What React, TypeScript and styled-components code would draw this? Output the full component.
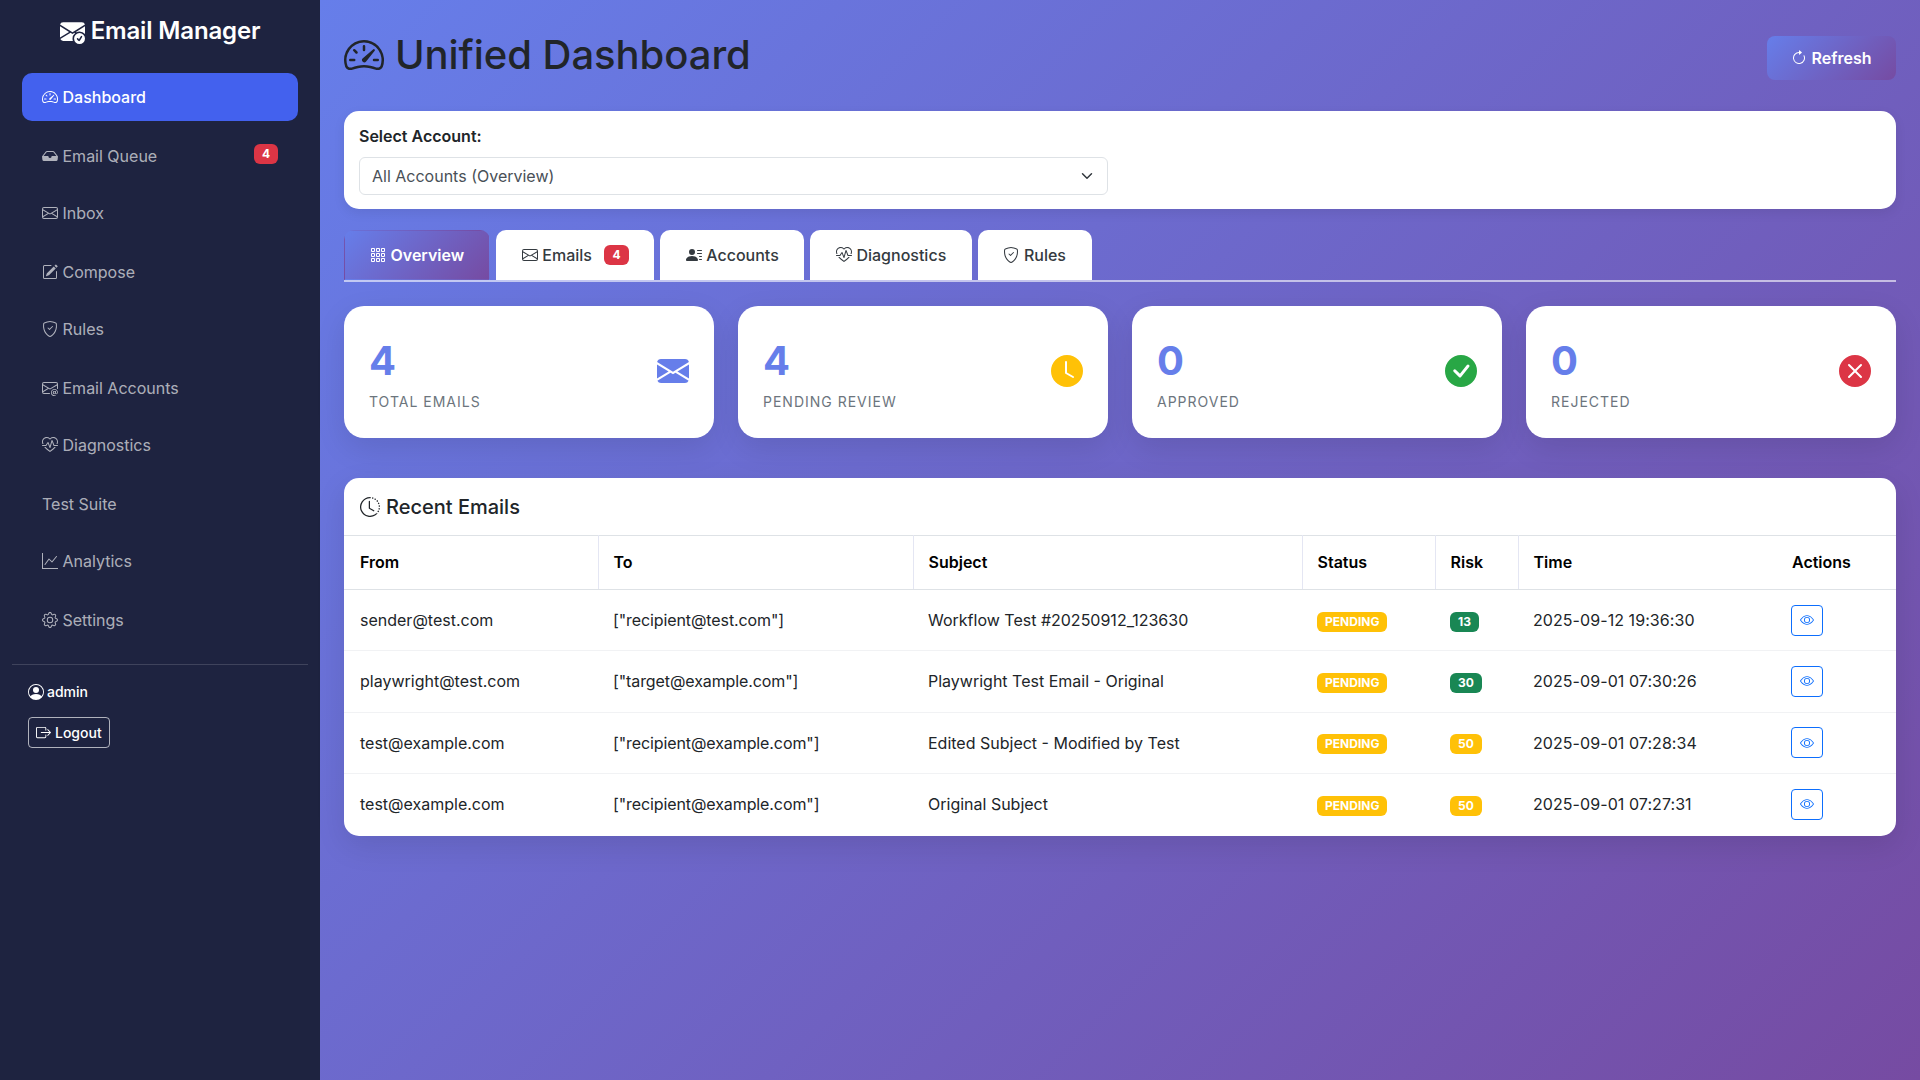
import { FC, ReactNode } from 'react';
import styled, { createGlobalStyle } from 'styled-components';
import {
  BsArrowClockwise,
  BsBoxArrowRight,
  BsCheckCircleFill,
  BsClockFill,
  BsClockHistory,
  BsEnvelope,
  BsEnvelopeAt,
  BsEnvelopeCheckFill,
  BsEnvelopeFill,
  BsEye,
  BsGear,
  BsGraphUp,
  BsGrid3X3Gap,
  BsHeartPulse,
  BsInboxFill,
  BsPencilSquare,
  BsPersonCircle,
  BsPersonLinesFill,
  BsShieldCheck,
  BsSpeedometer2,
  BsXCircleFill,
} from 'react-icons/bs';

const GRADIENT = 'linear-gradient(135deg, #667eea 0%, #764ba2 100%)';

const navItems: { label: string; icon?: ReactNode; badge?: number }[] = [
  { label: 'Dashboard', icon: <BsSpeedometer2 /> },
  { label: 'Email Queue', icon: <BsInboxFill />, badge: 4 },
  { label: 'Inbox', icon: <BsEnvelope /> },
  { label: 'Compose', icon: <BsPencilSquare /> },
  { label: 'Rules', icon: <BsShieldCheck /> },
  { label: 'Email Accounts', icon: <BsEnvelopeAt /> },
  { label: 'Diagnostics', icon: <BsHeartPulse /> },
  { label: 'Test Suite' },
  { label: 'Analytics', icon: <BsGraphUp /> },
  { label: 'Settings', icon: <BsGear /> },
];

const tabs: { label: string; icon: ReactNode; badge?: number }[] = [
  { label: 'Overview', icon: <BsGrid3X3Gap /> },
  { label: 'Emails', icon: <BsEnvelope />, badge: 4 },
  { label: 'Accounts', icon: <BsPersonLinesFill /> },
  { label: 'Diagnostics', icon: <BsHeartPulse /> },
  { label: 'Rules', icon: <BsShieldCheck /> },
];

const stats = [
  { value: 4, label: 'Total Emails', color: '#667eea', icon: <BsEnvelopeFill /> },
  { value: 4, label: 'Pending Review', color: '#ffc107', icon: <BsClockFill /> },
  { value: 0, label: 'Approved', color: '#28a745', icon: <BsCheckCircleFill /> },
  { value: 0, label: 'Rejected', color: '#dc3545', icon: <BsXCircleFill /> },
];

const emails = [
  {
    from: 'sender@test.com',
    to: '["recipient@test.com"]',
    subject: 'Workflow Test #20250912_123630',
    risk: 13,
    time: '2025-09-12 19:36:30',
  },
  {
    from: 'playwright@test.com',
    to: '["target@example.com"]',
    subject: 'Playwright Test Email - Original',
    risk: 30,
    time: '2025-09-01 07:30:26',
  },
  {
    from: 'test@example.com',
    to: '["recipient@example.com"]',
    subject: 'Edited Subject - Modified by Test',
    risk: 50,
    time: '2025-09-01 07:28:34',
  },
  {
    from: 'test@example.com',
    to: '["recipient@example.com"]',
    subject: 'Original Subject',
    risk: 50,
    time: '2025-09-01 07:27:31',
  },
];

const columns = [
  { label: 'From', width: 254 },
  { label: 'To', width: 315 },
  { label: 'Subject', width: 389 },
  { label: 'Status', width: 133 },
  { label: 'Risk', width: 83 },
  { label: 'Time', width: 259 },
  { label: 'Actions', width: 119 },
];

const App: FC = () => {
  return (
    <>
      <GlobalStyle />
      <Layout>
        <Sidebar>
          <Brand>
            <BsEnvelopeCheckFill />
            Email Manager
          </Brand>
          <Nav>
            {navItems.map((item) => (
              <NavLink key={item.label} $active={item.label === 'Dashboard'}>
                {item.icon}
                <span>{item.label}</span>
                {item.badge && <NavBadge>{item.badge}</NavBadge>}
              </NavLink>
            ))}
          </Nav>
          <SidebarFooter>
            <UserName>
              <BsPersonCircle />
              admin
            </UserName>
            <LogoutButton>
              <BsBoxArrowRight />
              Logout
            </LogoutButton>
          </SidebarFooter>
        </Sidebar>

        <Main>
          <Header>
            <PageTitle>
              <BsSpeedometer2 />
              Unified Dashboard
            </PageTitle>
            <RefreshButton>
              <BsArrowClockwise />
              Refresh
            </RefreshButton>
          </Header>

          <AccountCard>
            <FieldLabel htmlFor="account">Select Account:</FieldLabel>
            <AccountSelect id="account" defaultValue="all">
              <option value="all">All Accounts (Overview)</option>
            </AccountSelect>
          </AccountCard>

          <TabBar>
            {tabs.map((tab) => (
              <Tab key={tab.label} $active={tab.label === 'Overview'}>
                {tab.icon}
                <span>{tab.label}</span>
                {tab.badge && <TabBadge>{tab.badge}</TabBadge>}
              </Tab>
            ))}
          </TabBar>

          <StatGrid>
            {stats.map((stat) => (
              <StatCard key={stat.label}>
                <StatText>
                  <StatValue>{stat.value}</StatValue>
                  <StatLabel>{stat.label}</StatLabel>
                </StatText>
                <StatIcon $color={stat.color}>{stat.icon}</StatIcon>
              </StatCard>
            ))}
          </StatGrid>

          <TableCard>
            <TableTitle>
              <BsClockHistory />
              Recent Emails
            </TableTitle>
            <EmailTable>
              <colgroup>
                {columns.map((column) => (
                  <col key={column.label} width={column.width} />
                ))}
              </colgroup>
              <thead>
                <tr>
                  {columns.map((column) => (
                    <HeadCell key={column.label}>{column.label}</HeadCell>
                  ))}
                </tr>
              </thead>
              <tbody>
                {emails.map((email) => (
                  <BodyRow key={email.time}>
                    <Cell>{email.from}</Cell>
                    <Cell>{email.to}</Cell>
                    <Cell>{email.subject}</Cell>
                    <Cell>
                      <Pill $bg="#ffc107">PENDING</Pill>
                    </Cell>
                    <Cell>
                      <Pill $bg={email.risk < 50 ? '#198754' : '#ffc107'}>{email.risk}</Pill>
                    </Cell>
                    <Cell>{email.time}</Cell>
                    <Cell>
                      <ViewButton>
                        <BsEye />
                      </ViewButton>
                    </Cell>
                  </BodyRow>
                ))}
              </tbody>
            </EmailTable>
          </TableCard>
        </Main>
      </Layout>
    </>
  );
};

export default App;

const GlobalStyle = createGlobalStyle`
  * {
    box-sizing: border-box;
  }

  body {
    margin: 0;
    font-family: Inter, 'Liberation Sans', sans-serif;
    font-size: 16px;
    line-height: 1.5;
    color: #212529;
  }
`;

const Layout = styled.div`
  display: flex;
  min-height: 1080px;
`;

const Sidebar = styled.aside`
  flex: 0 0 320px;
  display: flex;
  flex-direction: column;
  padding: 13px 12px 0;
  background: #1e2340;
  color: #fff;
`;

const Brand = styled.div`
  display: flex;
  align-items: center;
  justify-content: center;
  gap: 6px;
  height: 36px;
  margin-bottom: 24.4px;
  font-size: 24px;
  font-weight: 600;
  letter-spacing: -0.15px;

  svg {
    width: 25px;
    height: 25px;
  }
`;

const Nav = styled.nav`
  display: flex;
  flex-direction: column;
  gap: 10px;
  padding: 0 10px 21px;
  border-bottom: 1px solid rgba(255, 255, 255, 0.15);
`;

const NavLink = styled.a<{ $active?: boolean }>`
  position: relative;
  display: flex;
  align-items: center;
  gap: 4.5px;
  height: 48px;
  padding: 0 20px;
  border-radius: 10px;
  background: ${({ $active }) => ($active ? '#4361ee' : 'transparent')};
  color: ${({ $active }) => ($active ? '#fff' : 'rgba(255, 255, 255, 0.65)')};
  font-weight: ${({ $active }) => ($active ? 500 : 400)};

  &:nth-child(even) {
    padding-top: 2px;
  }

  svg {
    width: 16px;
    height: 16px;
  }
`;

const NavBadge = styled.span`
  position: absolute;
  top: 13px;
  right: 20px;
  padding: 3px 8px;
  border-radius: 6px;
  background: #dc3545;
  color: #fff;
  font-size: 12px;
  font-weight: 700;
  line-height: 14px;
`;

const SidebarFooter = styled.div`
  padding: 16px 16px;
`;

const UserName = styled.div`
  display: flex;
  align-items: center;
  gap: 3px;
  height: 21px;
  margin-bottom: 15px;
  font-size: 14px;
  font-weight: 500;

  svg {
    width: 16px;
    height: 16px;
  }
`;

const LogoutButton = styled.button`
  display: inline-flex;
  align-items: center;
  gap: 4px;
  height: 31px;
  padding: 0 7px;
  border: 1px solid rgba(255, 255, 255, 0.65);
  border-radius: 4px;
  background: transparent;
  color: #fff;
  font-family: inherit;
  font-size: 14px;
  font-weight: 500;

  svg {
    width: 15px;
    height: 15px;
  }
`;

const Main = styled.main`
  flex: 1;
  min-width: 0;
  padding: 31px 24px 24px;
  background: ${GRADIENT};
`;

const Header = styled.header`
  display: flex;
  align-items: flex-start;
  justify-content: space-between;
  height: 80px;
`;

const PageTitle = styled.h1`
  display: flex;
  align-items: center;
  gap: 11px;
  margin: 0;
  font-size: 40px;
  font-weight: 500;
  letter-spacing: -0.05px;
  line-height: 48px;

  svg {
    width: 40px;
    height: 40px;
  }
`;

const RefreshButton = styled.button`
  display: flex;
  align-items: center;
  gap: 4.5px;
  height: 44px;
  margin-top: 5px;
  padding: 0 24.5px;
  border: 0;
  border-radius: 8px;
  background: ${GRADIENT};
  color: #fff;
  font-family: inherit;
  font-size: 16px;
  font-weight: 600;

  svg {
    width: 16px;
    height: 16px;
  }
`;

const AccountCard = styled.section`
  display: flex;
  flex-direction: column;
  height: 98px;
  padding: 13px 15px 0;
  border-radius: 15px;
  background: #fff;
  box-shadow: 0 4px 12px rgba(0, 0, 0, 0.08);
`;

const FieldLabel = styled.label`
  height: 33px;
  font-weight: 600;
`;

const AccountSelect = styled.select`
  width: 749px;
  height: 38px;
  padding: 0 36px 0 12px;
  border: 1px solid #dee2e6;
  border-radius: 6px;
  appearance: none;
  background: #fff
    url("data:image/svg+xml,%3csvg xmlns='http://www.w3.org/2000/svg' viewBox='0 0 16 16'%3e%3cpath fill='none' stroke='%23343a40' stroke-linecap='round' stroke-linejoin='round' stroke-width='2' d='m2 5 6 6 6-6'/%3e%3c/svg%3e")
    no-repeat right 12px center / 16px 12px;
  color: #495057;
  font-family: inherit;
  font-size: 16px;
`;

const TabBar = styled.div`
  display: flex;
  gap: 6px;
  height: 52px;
  margin-top: 21px;
  border-bottom: 2px solid rgba(255, 255, 255, 0.6);
`;

const Tab = styled.a<{ $active?: boolean }>`
  display: flex;
  align-items: center;
  gap: 4.5px;
  height: 50px;
  padding: 0 ${({ $active }) => ($active ? 25 : 24.6)}px;
  border: 1px solid transparent;
  border-radius: 10px 10px 0 0;
  background: ${({ $active }) => ($active ? GRADIENT : '#fff')};
  color: ${({ $active }) => ($active ? '#fff' : '#343a40')};
  font-weight: ${({ $active }) => ($active ? 600 : 500)};

  svg {
    width: 16px;
    height: 16px;
  }
`;

const TabBadge = styled.span`
  margin-left: 8px;
  padding: 3px 8px;
  border-radius: 6px;
  background: #dc3545;
  color: #fff;
  font-size: 12px;
  font-weight: 700;
  line-height: 14px;
`;

const StatGrid = styled.div`
  display: grid;
  grid-template-columns: repeat(4, 1fr);
  gap: 24px;
  margin-top: 24px;
`;

const StatCard = styled.article`
  display: flex;
  align-items: center;
  justify-content: space-between;
  height: 132px;
  padding: 0 25px;
  border-radius: 20px;
  background: #fff;
  box-shadow: 0 10px 30px rgba(0, 0, 0, 0.1);
`;

const StatText = styled.div`
  padding-top: 5px;
`;

const StatValue = styled.div`
  color: #667eea;
  font-size: 40px;
  font-weight: 700;
  line-height: 48px;
`;

const StatLabel = styled.div`
  margin-top: 6px;
  color: #6c757d;
  font-size: 14px;
  letter-spacing: 1px;
  line-height: 21px;
  text-transform: uppercase;
`;

const StatIcon = styled.div<{ $color: string }>`
  display: flex;
  margin-bottom: 2px;
  color: ${({ $color }) => $color};

  svg {
    width: 32px;
    height: 32px;
  }
`;

const TableCard = styled.section`
  margin-top: 40px;
  padding-bottom: 1.5px;
  overflow: hidden;
  border-radius: 15px;
  background: #fff;
  box-shadow: 0 10px 30px rgba(0, 0, 0, 0.1);
`;

const TableTitle = styled.h2`
  display: flex;
  align-items: center;
  gap: 6px;
  height: 57px;
  margin: 0;
  padding: 0 16px;
  font-size: 20px;
  font-weight: 500;

  svg {
    width: 20px;
    height: 20px;
  }
`;

const EmailTable = styled.table`
  width: 100%;
  border-collapse: collapse;
  table-layout: fixed;
`;

const HeadCell = styled.th`
  height: 54px;
  padding: 0 15px 2px;
  border-top: 1px solid #dee2e6;
  border-bottom: 1px solid #dee2e6;
  border-right: 1px solid #e4e6f3;
  color: #000;
  font-weight: 600;
  text-align: left;

  &:first-child {
    padding-left: 16px;
  }

  &:last-child,
  &:nth-last-child(2) {
    border-right: 0;
  }
`;

const BodyRow = styled.tr`
  height: 61.3px;

  & + & {
    border-top: 1px solid #f1f2f4;
  }
`;

const Cell = styled.td`
  padding: 0 15px;

  &:first-child {
    padding-left: 16px;
  }

  &:nth-child(2) {
    letter-spacing: -0.1px;
  }

  &:nth-child(6) {
    letter-spacing: 0.07px;
  }
`;

const Pill = styled.span<{ $bg: string }>`
  display: inline-block;
  padding: 3px 8px;
  border-radius: 6px;
  background: ${({ $bg }) => $bg};
  color: #fff;
  font-size: 12px;
  font-weight: 700;
  line-height: 14px;
  vertical-align: middle;
`;

const ViewButton = styled.button`
  display: flex;
  align-items: center;
  justify-content: center;
  width: 32px;
  height: 31px;
  margin-left: -1px;
  padding: 0;
  border: 1px solid #0d6efd;
  border-radius: 4px;
  background: transparent;
  color: #0d6efd;

  svg {
    width: 14px;
    height: 14px;
  }
`;
